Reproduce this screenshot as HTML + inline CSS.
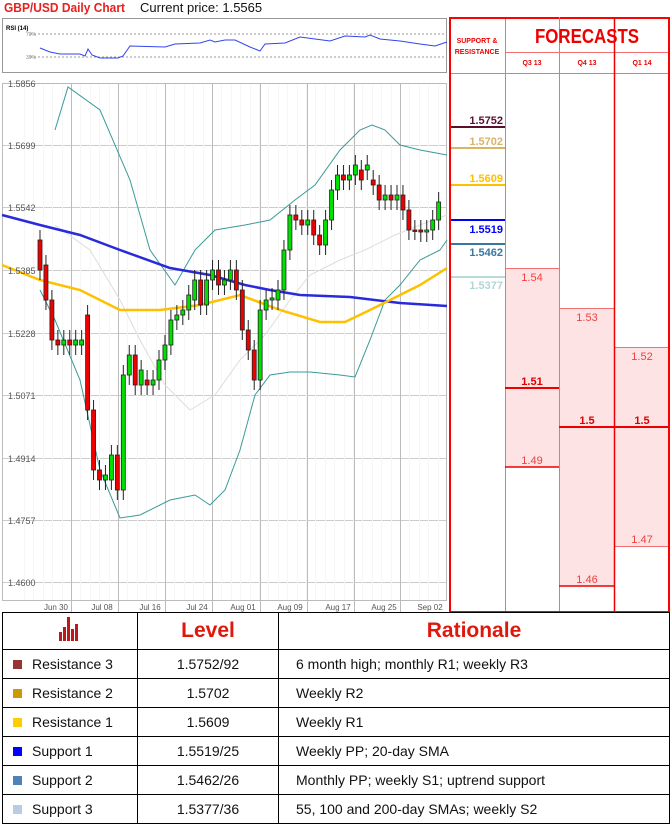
<!DOCTYPE html>
<html><head><meta charset="utf-8">
<style>
*{margin:0;padding:0;box-sizing:border-box}
body{width:672px;height:826px;background:#fff;font-family:"Liberation Sans",sans-serif;position:relative;overflow:hidden}
.abs{position:absolute}
table{border-collapse:collapse;position:absolute;left:2px;top:612px;width:668px}
td{border:1.5px solid #000;font-size:14px;color:#111;height:29px}
.c1{width:135px;padding-left:10px;white-space:nowrap}
.c2{width:141px;text-align:center}
.c3{padding-left:17px}
.sq{display:inline-block;width:9px;height:9px;margin-right:10px;vertical-align:0px}
.hd{font-weight:bold;color:#e0180c;font-size:21px;text-align:center;height:37px}
</style></head><body>
<div class="abs" style="left:4px;top:0;font-size:13px;font-weight:bold;color:#e8201e;transform:scaleX(.92);transform-origin:left">GBP/USD Daily Chart</div>
<div class="abs" style="left:140px;top:0;font-size:13px;color:#111">Current price: 1.5565</div>

<svg class="abs" style="left:0;top:0" width="450" height="612" id="ch">
<rect x="2.5" y="18.5" width="444" height="54" fill="#fff" stroke="#999"/>
<text x="6" y="30" font-size="6" font-weight="bold" font-family="Liberation Sans">RSI (14)</text>
<line x1="30" y1="34" x2="446" y2="34" stroke="#999" stroke-dasharray="2,2"/>
<line x1="30" y1="57" x2="446" y2="57" stroke="#999" stroke-dasharray="2,2"/>
<text x="26" y="36" font-size="5" fill="#888">70%</text>
<text x="26" y="59" font-size="5" fill="#888">30%</text>
<polyline fill="none" stroke="#3344ee" stroke-width="1" points="40,48 50,52 60,54 80,54 85,56 88,49 92,55 100,58 118,58 123,56 130,46 165,47 175,44 200,43 210,40 215,42 225,40 235,40 250,47 260,51 265,44 285,43 300,37 315,39 330,41 345,36 365,37 370,35 380,39 400,41 420,44 435,46 447,42"/>
<rect x="2.5" y="83.5" width="444" height="517" fill="#fff" stroke="#bbb"/>
<g id="grid"></g>
<polyline fill="none" stroke="#ddd" stroke-width="1" points="55,225 90,250 120,300 140,340 165,385 190,410 215,395 240,360 265,335 290,300 310,275 340,260 365,250 395,235 420,225 447,215"/>
<polyline fill="none" stroke="#3a9a98" stroke-width="1" points="55,130 68,87 100,110 130,180 150,250 175,285 195,250 215,230 245,225 270,220 295,200 315,185 340,150 360,130 372,125 385,130 400,145 420,150 447,155"/>
<polyline fill="none" stroke="#3a9a98" stroke-width="1" points="40,290 55,320 80,380 100,470 120,518 140,515 170,500 195,495 210,505 225,490 240,450 255,395 270,375 290,372 310,372 340,375 355,377 370,340 385,300 400,285 420,260 440,250 447,240"/>
<polyline fill="none" stroke="#2a2add" stroke-width="2.5" points="2,215 40,225 80,235 120,250 170,268 210,275 245,285 270,290 300,295 350,297 400,303 447,306"/>
<polyline fill="none" stroke="#ffc000" stroke-width="2.5" points="2,265 40,280 80,290 120,310 160,310 200,305 240,295 280,310 320,322 345,322 370,310 400,295 420,285 447,268"/>
<g id="cd"></g>
<g font-size="9" fill="#555" font-family="Liberation Sans">
<text x="8" y="87">1.5856</text><text x="8" y="149">1.5699</text><text x="8" y="211">1.5542</text><text x="8" y="274">1.5385</text><text x="8" y="337">1.5228</text><text x="8" y="399">1.5071</text><text x="8" y="462">1.4914</text><text x="8" y="524">1.4757</text><text x="8" y="586">1.4600</text>
</g>
<g font-size="8" fill="#555" font-family="Liberation Sans" text-anchor="middle">
<text x="56" y="610">Jun 30</text><text x="102" y="610">Jul 08</text><text x="150" y="610">Jul 16</text><text x="197" y="610">Jul 24</text><text x="243" y="610">Aug 01</text><text x="290" y="610">Aug 09</text><text x="338" y="610">Aug 17</text><text x="384" y="610">Aug 25</text><text x="430" y="610">Sep 02</text>
</g>
</svg>

<svg class="abs" style="left:449px;top:17px" width="223" height="596">
<rect x="56" y="251" width="54" height="199" fill="#fde3e3"/>
<rect x="110" y="291" width="55" height="278" fill="#fde3e3"/>
<rect x="165" y="330" width="54" height="199" fill="#fde3e3"/>
<g stroke="#f47070" stroke-width="1">
<line x1="56.5" y1="0" x2="56.5" y2="596"/><line x1="110.5" y1="35" x2="110.5" y2="596"/><line x1="165.5" y1="35" x2="165.5" y2="596"/>
<line x1="56" y1="35.5" x2="220" y2="35.5"/><line x1="1" y1="56.5" x2="220" y2="56.5"/>
<line x1="56" y1="251.5" x2="110" y2="251.5"/><line x1="110" y1="291.5" x2="165" y2="291.5"/><line x1="165" y1="330.5" x2="220" y2="330.5"/><line x1="165" y1="529.5" x2="220" y2="529.5"/>
</g>
<g stroke="#e00" stroke-width="1.5">
<line x1="56" y1="450" x2="110" y2="450"/><line x1="110" y1="569" x2="165" y2="569"/>
</g>
<g stroke="#e00" stroke-width="2"><line x1="56" y1="371" x2="110" y2="371"/><line x1="110" y1="410" x2="220" y2="410"/></g>
<rect x="1" y="1" width="219" height="594" fill="none" stroke="#f00" stroke-width="2"/>
<line x1="165.5" y1="0" x2="165.5" y2="596" stroke="#e00" stroke-width="1.5"/>
<line x1="110.5" y1="0" x2="110.5" y2="35" stroke="#f47070"/>
<g font-family="Liberation Sans" font-size="7" font-weight="bold" fill="#e00" text-anchor="middle">
<text x="28" y="26">SUPPORT &amp;</text><text x="28" y="37">RESISTANCE</text>
<text x="83" y="48">Q3 13</text><text x="138" y="48">Q4 13</text><text x="193" y="48">Q1 14</text>
</g>
<text x="138" y="26" font-family="Liberation Sans" font-size="20" font-weight="bold" fill="#e00" text-anchor="middle" textLength="104" lengthAdjust="spacingAndGlyphs">FORECASTS</text>
<g stroke-width="2">
<line x1="2" y1="110" x2="56" y2="110" stroke="#5a0f2e"/><line x1="2" y1="131" x2="56" y2="131" stroke="#d9b36a"/>
<line x1="2" y1="168" x2="56" y2="168" stroke="#ffc000"/><line x1="2" y1="203" x2="56" y2="203" stroke="#0000ff"/>
<line x1="2" y1="227" x2="56" y2="227" stroke="#3a77a0"/><line x1="2" y1="260" x2="56" y2="260" stroke="#b9dada"/>
</g>
<g font-family="Liberation Sans" font-size="11" font-weight="bold" text-anchor="end">
<text x="54" y="107" fill="#5a0f2e">1.5752</text><text x="54" y="128" fill="#d9b36a">1.5702</text>
<text x="54" y="165" fill="#ffc000">1.5609</text><text x="54" y="216" fill="#0000ff">1.5519</text>
<text x="54" y="239" fill="#3a77a0">1.5462</text><text x="54" y="272" fill="#b0d6d6">1.5377</text>
</g>
<g font-family="Liberation Sans" font-size="11" fill="#f04040" text-anchor="middle">
<text x="83" y="264">1.54</text><text x="83" y="368" font-weight="bold" fill="#d00">1.51</text><text x="83" y="447">1.49</text>
<text x="138" y="304">1.53</text><text x="138" y="407" font-weight="bold" fill="#d00">1.5</text><text x="138" y="566">1.46</text>
<text x="193" y="343">1.52</text><text x="193" y="407" font-weight="bold" fill="#d00">1.5</text><text x="193" y="526">1.47</text>
</g>
</svg>

<table>
<tr><td class="c1 hd" style="text-align:center;padding:0"><svg width="26" height="26" viewBox="0 0 26 26"><g fill="#c0171b"><rect x="2" y="17" width="3" height="9"/><rect x="6" y="12" width="3" height="14"/><rect x="10" y="2" width="3" height="24"/><rect x="14" y="14" width="3" height="12"/><rect x="18" y="9" width="3" height="17"/></g></svg></td><td class="c2 hd">Level</td><td class="hd">Rationale</td></tr>
<tr><td class="c1"><span class="sq" style="background:#943634"></span>Resistance 3</td><td class="c2">1.5752/92</td><td class="c3">6 month high; monthly R1; weekly R3</td></tr>
<tr><td class="c1"><span class="sq" style="background:#cc9900"></span>Resistance 2</td><td class="c2">1.5702</td><td class="c3">Weekly R2</td></tr>
<tr><td class="c1"><span class="sq" style="background:#ffcc00"></span>Resistance 1</td><td class="c2">1.5609</td><td class="c3">Weekly R1</td></tr>
<tr><td class="c1"><span class="sq" style="background:#0000ff"></span>Support 1</td><td class="c2">1.5519/25</td><td class="c3">Weekly PP; 20-day SMA</td></tr>
<tr><td class="c1"><span class="sq" style="background:#4f81bd"></span>Support 2</td><td class="c2">1.5462/26</td><td class="c3">Monthly PP; weekly S1; uptrend support</td></tr>
<tr><td class="c1"><span class="sq" style="background:#b8cce4"></span>Support 3</td><td class="c2">1.5377/36</td><td class="c3">55, 100 and 200-day SMAs; weekly S2</td></tr>
</table>

<script>
var ns="http://www.w3.org/2000/svg";
function el(t,a,p){var e=document.createElementNS(ns,t);for(var k in a)e.setAttribute(k,a[k]);p.appendChild(e);return e;}
var g=document.getElementById("grid");
[145,207,270,333,395,458,520,582].forEach(function(y){el("line",{x1:3,x2:446,y1:y+.5,y2:y+.5,stroke:"#ccc"},g);});
for(var x=24;x<446;x+=9.4){el("line",{x1:Math.round(x)+.5,x2:Math.round(x)+.5,y1:84,y2:600,stroke:"#f6f6f6"},g);}
[71,118,165,212,260,307,354,400].forEach(function(x){el("line",{x1:x+.5,x2:x+.5,y1:84,y2:612,stroke:"#bbb"},g);});
var d=[[240,270],[265,300],[300,340],[340,345],[345,340],[340,345],[345,340],[345,340],[315,410],[410,470],[470,480],[480,475],[480,455],[455,490],[490,375],[375,355],[355,385],[385,370],[380,385],[385,380],[380,360],[360,345],[345,320],[320,315],[315,310],[310,295],[300,280],[280,305],[305,280],[280,270],[270,285],[285,280],[280,270],[270,290],[290,330],[330,350],[350,380],[380,310],[310,300],[300,298],[300,290],[290,250],[250,215],[215,220],[220,225],[225,220],[220,235],[235,245],[245,220],[220,190],[190,175],[175,180],[180,175],[175,165],[170,180],[170,165],[180,185],[185,200],[200,195],[195,200],[200,195],[195,210],[210,230],[230,230],[230,232],[232,230],[230,220],[220,202]];
var c=document.getElementById("cd");
d.forEach(function(v,i){var x=40+i*5.95,o=v[0],cl=v[1],t=Math.min(o,cl),b=Math.max(o,cl);
el("line",{x1:x,x2:x,y1:t-10,y2:b+10,stroke:"#222","stroke-width":1},c);
el("rect",{x:x-2,y:t,width:4,height:Math.max(b-t,1.5),fill:cl<o?"#00e000":"#ee0000",stroke:"#222","stroke-width":.8},c);});
</script>
</body></html>
